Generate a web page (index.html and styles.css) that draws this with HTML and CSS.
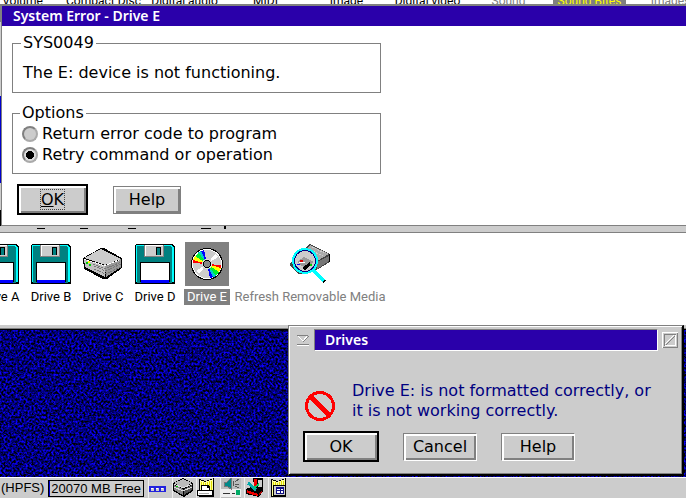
FILE: index.html
```
<!DOCTYPE html>
<html lang="en">
<head>
<meta charset="utf-8">
<title>System Error - Drive E</title>
<link rel="stylesheet" href="styles.css">
</head>
<body>
<svg class="defs" aria-hidden="true">
  <defs>
    <filter id="weave" x="0" y="0" width="100%" height="100%" color-interpolation-filters="sRGB">
      <feTurbulence type="fractalNoise" baseFrequency="0.5 0.45" numOctaves="2" seed="7"/>
      <feColorMatrix values="0.25 0 0 0 -0.13  0 0 0 0 0  2.4 0 0 0 -0.74  0 0 0 0 1"/>
    </filter>
    <symbol id="floppy" viewBox="0 0 40 40">
      <path d="M1 0H37L40 3V40H0V1z" fill="#000"/>
      <path d="M1 1H36L39 4V38H1z" fill="#0ff"/>
      <path d="M2 2H36L37 4V39H2z" fill="#008080"/>
      <path d="M9 1H29V13H9z" fill="#808080"/>
      <path d="M10 1H28V12H10z" fill="#ccc"/>
      <path d="M10 1H28V2H11V12H10z" fill="#fff"/>
      <path d="M21 3H26V11H21z" fill="#000"/>
      <path d="M22 4H25V11H22z" fill="#008080"/>
      <path d="M5 18H35V38H5z" fill="#000"/>
      <path d="M6 19H34V36H6z" fill="#fff"/>
      <path d="M6 36H34V39H6z" fill="#00f"/>
    </symbol>
    <symbol id="disk" viewBox="0 0 40 34">
      <path d="M0 11L18 1H21L39 11V21L24 32H20L1 22z" fill="#000"/>
      <path d="M1 11L18 2L38 12L22 18z" fill="#ccc"/>
      <path d="M1 12L22 19V30L2 20z" fill="#c0c0c0"/>
      <path d="M22 19L38 12V20L23 30z" fill="#999"/>
      <path d="M1 12L22 19L38 12" fill="none" stroke="#fff" stroke-dasharray="2 1"/>
      <path d="M11 19L22 24L38 17M11 22L22 27L38 20M10 17L22 22L38 15" fill="none" stroke="#777" stroke-dasharray="2 1"/>
      <path d="M3 15h2v2H3zM6 17h2v2H6z" fill="#0c0"/>
      <path d="M5 14h2v2H5z" fill="#ff0"/>
    </symbol>
    <symbol id="folder" viewBox="0 0 20 20">
      <path d="M2 1L8 3L17 0V19H2z" fill="#000"/>
      <path d="M3 2L8 4L16 1V18H3z" fill="#ffffa0"/>
      <path d="M4 4h1v13H4zM6 4h1v13H6zM8 5h1v12H8zM10 4h1v13h-1zM12 3h1v14h-1zM14 3h1v14h-1z" fill="#dd0"/>
    </symbol>
  </defs>
</svg>

<div class="media" aria-label="Multimedia">
  <span>Volume</span><span>Compact Disc</span><span>Digital audio</span><span>MIDI</span><span>Image</span><span>Digital video</span><span class="dim">Sound</span><span class="picked"><b>Sound Bites</b></span><span class="dim">Images</span>
</div>

<section class="error-shell">
  <div class="error-window">
    <h1 class="titlebar">System Error - Drive E</h1>
    <form class="error-body">
      <fieldset class="group">
        <legend>SYS0049</legend>
        <p>The E: device is not functioning.</p>
      </fieldset>
      <fieldset class="group options">
        <legend>Options</legend>
        <label><input type="radio" name="action">Return error code to program</label>
        <label><input type="radio" name="action" checked>Retry command or operation</label>
      </fieldset>
      <div class="error-buttons">
        <button type="button" class="button default"><span class="focus"><u>O</u>K</span></button>
        <button type="button" class="button">Help</button>
      </div>
    </form>
  </div>
</section>

<section class="folder">
  <svg class="band" width="240" height="6" aria-hidden="true"><path d="M37 2h8v1h-8zM80 2h8v1h-8zM128 2h8v1h-8zM201 2h10v1h-10zM224 0h2v3h-2z"/></svg>
  <div class="drives">
    <div class="drive"><div class="pic"><svg width="40" height="40"><use href="#floppy"/></svg></div><span>Drive A</span></div>
    <div class="drive"><div class="pic"><svg width="40" height="40"><use href="#floppy"/></svg></div><span>Drive B</span></div>
    <div class="drive"><div class="pic"><svg width="40" height="34"><use href="#disk"/></svg></div><span>Drive C</span></div>
    <div class="drive"><div class="pic"><svg width="40" height="40"><use href="#floppy"/></svg></div><span>Drive D</span></div>
    <div class="drive selected"><div class="pic">
      <svg width="32" height="32" viewBox="0 0 32 32">
        <circle cx="16" cy="16" r="16" fill="#000"/>
        <circle cx="16" cy="16" r="15" fill="#fff"/>
        <circle cx="16" cy="16" r="14" fill="#ccc"/>
        <path d="M16 16L2 11L2 15z" fill="#f00"/><path d="M16 16L2 12L4 8z" fill="#ff0"/><path d="M16 16L4 8L8 4z" fill="#0e3"/><path d="M16 16L7 4L10 3z" fill="#0cc"/><path d="M16 16L10 3L13 2z" fill="#00f"/>
        <path d="M16 16L30 21L30 17z" fill="#f00"/><path d="M16 16L30 20L28 24z" fill="#ff0"/><path d="M16 16L28 24L24 28z" fill="#0e3"/><path d="M16 16L25 28L22 29z" fill="#0cc"/><path d="M16 16L22 29L19 30z" fill="#00f"/>
        <path d="M16 16L24 6L27 9zM16 16L8 26L5 23z" fill="#fff"/>
        <circle cx="16" cy="16" r="5" fill="#ddd"/><circle cx="16" cy="16" r="4" fill="#000"/><circle cx="16" cy="16" r="3" fill="#888"/>
      </svg></div><span>Drive E</span></div>
    <div class="drive wide dim"><div class="pic">
      <svg width="40" height="40" viewBox="0 0 40 40">
        <path d="M0 19L20 0L40 10V18L23 28L8 30L0 22z" fill="#444"/>
        <path d="M2 19L20 1L39 10L27 17L20 26z" fill="#aaa"/>
        <path d="M27 18L39 12V17L27 25z" fill="#777"/>
        <path d="M39 10h1v8h-1z" fill="#000"/>
        <path d="M18 5L33 12M22 3L36 10M13 9L28 16" stroke="#ccc" stroke-dasharray="2 1"/>
        <circle cx="15" cy="17" r="11" fill="#ccc" stroke="#000080" stroke-width="2"/>
        <path d="M7 18L14 13L24 18L16 25z" fill="#999"/><path d="M12 24L20 18L21 21L15 26z" fill="#000"/><path d="M10 16h3v2h-3z" fill="#d00"/><path d="M7 20h3v1H7z" fill="#00f"/><path d="M9 18h6v1H9z" fill="#fff"/><path d="M20 20h2v2h-2z" fill="#0c0"/>
        <circle cx="15" cy="17" r="12" fill="none" stroke="#0ff" stroke-width="2"/>
        <path d="M24 27L35 38" stroke="#000" stroke-width="4"/><path d="M23 26L34 37" stroke="#0ff" stroke-width="3"/>
      </svg></div><span>Refresh Removable Media</span></div>
  </div>
</section>

<main class="desktop">
  <svg class="texture" aria-hidden="true"><rect width="100%" height="100%" filter="url(#weave)"/></svg>
  <section class="drives-window">
    <header>
      <button type="button" class="chrome" aria-label="Minimize"><svg width="14" height="14" viewBox="0 0 14 14"><path d="M1 2H12L7 8z" fill="none" stroke="#fff"/><path d="M13 3L7 9" stroke="#808080"/><path d="M1 2.500H12M1 11.500H13" stroke="#808080"/><path d="M1 12.500H13" stroke="#fff"/></svg></button>
      <h2>Drives</h2>
      <button type="button" class="chrome" aria-label="Close"><svg width="16" height="16" viewBox="0 0 16 16"><path d="M.5 15.500V.5H15.500" fill="none" stroke="#fff"/><path d="M.5 15.500H15.500V.5" fill="none" stroke="#808080"/><path d="M2.500 13.500V2.500H13.500" fill="none" stroke="#808080"/><path d="M3 13.500H13.500V3" fill="none" stroke="#fff"/><path d="M4 13L13 4" stroke="#808080"/><path d="M3 12L12 3" stroke="#fff"/></svg></button>
    </header>
    <div class="message">
      <svg width="32" height="32" viewBox="0 0 32 32"><circle cx="16" cy="16" r="13.500" fill="none" stroke="#f00" stroke-width="3"/><path d="M6 6L26 26" stroke="#f00" stroke-width="5"/></svg>
      <p>Drive E: is not formatted correctly, or<br>it is not working correctly.</p>
    </div>
    <div class="drives-buttons">
      <button type="button" class="button default">OK</button>
      <button type="button" class="button sunk">Cancel</button>
      <button type="button" class="button sunk">Help</button>
    </div>
  </section>
</main>

<footer class="taskbar">
  <span>(HPFS)</span>
  <span class="meter">20070 MB Free</span>
  <div class="tasks">
  <button type="button" class="task" aria-label="Windows"><svg width="20" height="20" viewBox="0 0 20 20"><path d="M0 8H17V14H0z" fill="#22d"/><path d="M2 10h3v3H2zM7 10h3v3H7zM12 10h3v3h-3z" fill="#ccc"/><path d="M2 10h2v1H2zM7 10h2v1H7zM12 10h2v1h-2z" fill="#fff"/></svg></button>
  <button type="button" class="task" aria-label="Drives"><svg width="20" height="20" viewBox="0 0 20 20"><path d="M0 5L10 0L20 5V13L11 19L0 13z" fill="#000"/><path d="M1 5L10 1L19 5L10 10z" fill="#bbb"/><path d="M1 7L10 11V17L1 12z" fill="#888"/><path d="M11 11L19 7V12L11 17z" fill="#555"/><path d="M1 6L10 10L19 6M1 9L10 13L19 9" stroke="#ddd" fill="none"/><path d="M3 8h2v1H3z" fill="#0c0"/></svg></button>
  <button type="button" class="task" aria-label="Printer"><svg width="20" height="20"><use href="#folder"/><path d="M4 7H11L13 9V12H16V18H0V12H4z" fill="#000"/><path d="M5 8H10V10H12V12H5zM1 13H15V17H1z" fill="#fff"/><path d="M2 15H12V16H2z" fill="#aaa"/></svg></button>
  <button type="button" class="task" aria-label="Volume"><svg width="20" height="20"><path d="M0 0H20V20H0z" fill="#bbb"/><path d="M0 11H20V19H0z" fill="#eee"/><path d="M3 4H6L10 0V11L6 8H3z" fill="#088" stroke="#777"/><path d="M12 3v5M14 4L18 1M14 6H18M14 8L18 10" stroke="#555"/><path d="M2 15H9M11 15H14" stroke="#333"/><path d="M15 12h4v5h-4z" fill="#0a6"/></svg></button>
  <button type="button" class="task" aria-label="Toolbox"><svg width="20" height="20"><path d="M8 0H18V13L14 19L1 16V11L9 8z" fill="#000"/><path d="M9 1H12V8L9 8zM2 12L13 16V18L2 15z" fill="#e00"/><path d="M14 15L17 12V14L14 18z" fill="#a00"/><path d="M13 2H17V9H13z" fill="#ccc"/><path d="M3 5L11 12" stroke="#0aa" stroke-width="3"/><path d="M9 10L14 6" stroke="#0c6" stroke-width="2"/></svg></button>
  <button type="button" class="task" aria-label="Windows folder"><svg width="20" height="20"><use href="#folder"/><path d="M4 7H17V18H4z" fill="#000"/><path d="M5 8H16V17H5z" fill="#ccc"/><path d="M7 9H15V16H7z" fill="#118"/><path d="M8 11h3v1H8zM12 11h2v1h-2zM8 13h3v2H8zM12 13h2v2h-2z" fill="#fff"/></svg></button>
  </div>
</footer>
</body>
</html>
```
FILE: styles.css
```
* { box-sizing: border-box; margin: 0; padding: 0; }

body {
  display: flex;
  flex-direction: column;
  min-height: 100vh;
  overflow: hidden;
  background: #ccc;
  color: #000;
  font: 16px/20px "DejaVu Sans", sans-serif;
}

button { font: inherit; color: inherit; }
svg { display: block; shape-rendering: crispEdges; }
.defs { position: absolute; width: 0; height: 0; }
.dim { color: #808080; }

/* Multimedia folder, mostly covered by the error window */
.media {
  display: flex;
  height: 4px;
  margin-left: -18px;
  overflow: hidden;
  background: #fff;
  font: 12px/2px Roboto, sans-serif;
  text-align: center;
  white-space: nowrap;
}
.media span { flex: none; width: 81px; }
.picked b { display: block; height: 4px; margin: 0 4px; background: #808080; color: #ff0; font-weight: 400; }

/* Error window */
.error-shell {
  padding-left: 1px;
  background: linear-gradient(#808080 18px, #ccc 18px 92px, #00c 92px 179px, #ccc 179px 206px, #000 206px);
}
.error-window {
  padding-bottom: 10px;
  border: solid #808080;
  border-width: 2px 0 1px 1px;
  background: #fff;
}
.titlebar {
  height: 20px;
  padding-left: 11px;
  background: #2a00aa;
  color: #fff;
  font: 600 14px/19px "Noto Sans", sans-serif;
}
.error-body { padding: 7px 10px 0; }
.group {
  width: 369px;
  max-width: 100%;
  height: 60px;
  padding: 10px 10px 0;
  border: 1px solid #808080;
}
.group legend { margin-left: -2px; padding: 0 2px; }
.options { height: 71px; margin-top: 10px; padding: 0 9px; }
.options label { display: flex; align-items: center; gap: 4px; height: 21px; }
.options input {
  appearance: none;
  width: 16px;
  height: 16px;
  border: 2px solid #808080;
  border-right-color: #aaa;
  border-bottom-color: #aaa;
  border-radius: 50%;
  background: #ccc;
}
.options input:checked { background: radial-gradient(circle, #000 4px, #ddd 4px); }

.button {
  width: 68px;
  height: 28px;
  border: 1px solid #808080;
  background: #ccc;
  box-shadow: inset 2px 2px #fff, inset -2px -2px #808080;
}
.button.default { height: 31px; border: 2px solid #000; }
.button.sunk { border-right-color: #fff; border-bottom-color: #fff; }
.error-buttons { display: flex; align-items: center; gap: 25px; margin: 10px 0 0 5px; }
.error-buttons .default { width: 71px; }
.focus { outline: 1px dotted #444; }

/* Drives folder */
.folder {
  border-bottom: 1px solid #808080;
  background: #ccc;
  padding-bottom: 3px;
}
.drives {
  display: flex;
  height: 93px;
  padding-top: 9px;
  overflow: hidden;
  border-top: 1px solid #808080;
  background: #fff;
  font: 13px/16px Roboto, sans-serif;
  white-space: nowrap;
}
.drive {
  display: flex;
  flex: none;
  flex-direction: column;
  align-items: center;
  gap: 3px;
  width: 52px;
}
.drive:first-child { margin-left: -27px; }
.wide { width: 154px; }
.pic { display: grid; place-items: center; width: 44px; height: 44px; }
.drive span { padding: 0 3px; }
.selected .pic, .selected span { background: #808080; color: #fff; }

/* Desktop */
.desktop {
  position: relative;
  flex: 1;
  border-top: 1px solid #000;
  background: #000080;
}
.texture { position: absolute; width: 100%; height: 100%; }
.drives-window {
  position: absolute;
  top: -5px;
  right: 2px;
  width: 396px;
  height: 151px;
  border: solid #808080;
  border-width: 1px 2px 2px 1px;
  border-right-color: #000;
  border-bottom-color: #000;
  background: #ccc;
  box-shadow: inset 1px 1px #fff, inset -1px -1px #808080;
}
.drives-window header { display: flex; align-items: center; gap: 4px; padding: 3px 4px 0 7px; }
.drives-window h2 {
  flex: 1;
  height: 22px;
  padding-left: 10px;
  border: 1px solid #fff;
  border-top-color: #808080;
  border-left-color: #808080;
  background: #2a00aa;
  color: #fff;
  font: 600 14px/19px "Noto Sans", sans-serif;
}
.chrome { border: 0; background: none; }
.message { display: flex; align-items: flex-end; gap: 16px; height: 71px; padding-left: 15px; color: #000080; white-space: nowrap; }
.message p { padding-bottom: 1px; }
.drives-buttons { display: flex; align-items: center; gap: 24px; padding: 9px 0 0 14px; }
.drives-buttons .button { width: 74px; }
.drives-buttons .default { width: 76px; }

/* Taskbar */
.taskbar {
  display: flex;
  align-items: center;
  gap: 4px;
  height: 21px;
  padding-left: 1px;
  border-top: 1px solid #fff;
  font: 13px/16px "Liberation Sans", sans-serif;
  white-space: nowrap;
}
.meter { height: 17px; padding: 0 2px; border: 1px solid #000; box-shadow: inset 1px 0 #00c; }
.tasks { display: flex; gap: 3px; }
.task { border: 0; border-left: 1px solid #eee; background: none; }
```
